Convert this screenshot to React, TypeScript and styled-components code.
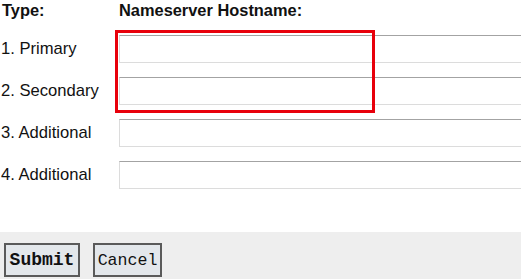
import React from 'react';
import styled, { createGlobalStyle } from 'styled-components';

const rows = ['1. Primary', '2. Secondary', '3. Additional', '4. Additional'];

export default function App() {
	return (
		<>
			<GlobalStyle />
			<Page>
				<Form>
					<HeadCell>Type:</HeadCell>
					<HeadCell>Nameserver Hostname:</HeadCell>
					{rows.map((label) => (
						<React.Fragment key={label}>
							<Label>{label}</Label>
							<Field>
								<TextInput type='text' />
							</Field>
						</React.Fragment>
					))}
					<Highlight />
				</Form>
				<Footer>
					<Button $bold>Submit</Button>
					<Button>Cancel</Button>
				</Footer>
			</Page>
		</>
	);
}

// Styled Components ...
const GlobalStyle = createGlobalStyle`
	html, body {
		margin: 0;
		padding: 0;
		background: #fff;
		overflow: hidden;
	}
`;
const Page = styled.div`
	width: 521px;
	height: 279px;
	display: flex;
	flex-direction: column;
	overflow: hidden;
	font-family: 'Liberation Sans', Arial, sans-serif;
	color: #111;
`;
const Form = styled.div`
	position: relative;
	display: grid;
	grid-template-columns: 119px 420px;
	grid-template-rows: 28px repeat(4, 42px);
	padding-left: 1px;
`;
const HeadCell = styled.div`
	font-size: 16.4px;
	font-weight: bold;
	line-height: 18px;
	padding-top: 1px;
	&:first-child {
		padding-left: 1px;
	}
	&:nth-child(2) {
		margin-left: -1px;
	}
`;
const Label = styled.div`
	display: flex;
	align-items: center;
	font-size: 16.6px;
	padding-bottom: 1px;
`;
const Field = styled.div`
	display: flex;
	align-items: center;
	margin-left: -1px;
`;
const TextInput = styled.input`
	box-sizing: border-box;
	width: 420px;
	height: 28px;
	margin: 0;
	padding: 0 4px;
	border: 1px solid #dcdcdc;
	border-top-color: #a3a3a3;
	background: #fff;
	outline: none;
`;
const Highlight = styled.div`
	position: absolute;
	left: 115px;
	top: 30px;
	width: 260px;
	height: 83px;
	box-sizing: border-box;
	border: 3px solid #e8000b;
	pointer-events: none;
`;
const Footer = styled.div`
	margin-top: 36px;
	flex: 1;
	background: #eeeeee;
	display: flex;
	align-items: flex-start;
	gap: 13px;
	padding: 11px 0 0 4px;
`;
const Button = styled.button<{ $bold?: boolean }>`
	box-sizing: border-box;
	height: 34px;
	margin: 0;
	padding: 0;
	border: 2px solid #5a5a5a;
	background: #e3e7eb;
	font-family: 'Liberation Mono', 'Courier New', monospace;
	font-size: ${(p) => (p.$bold ? '18px' : '16.6px')};
	font-weight: ${(p) => (p.$bold ? 'bold' : 'normal')};
	color: #111;
	width: ${(p) => (p.$bold ? '76px' : '69px')};
	text-align: center;
`;
